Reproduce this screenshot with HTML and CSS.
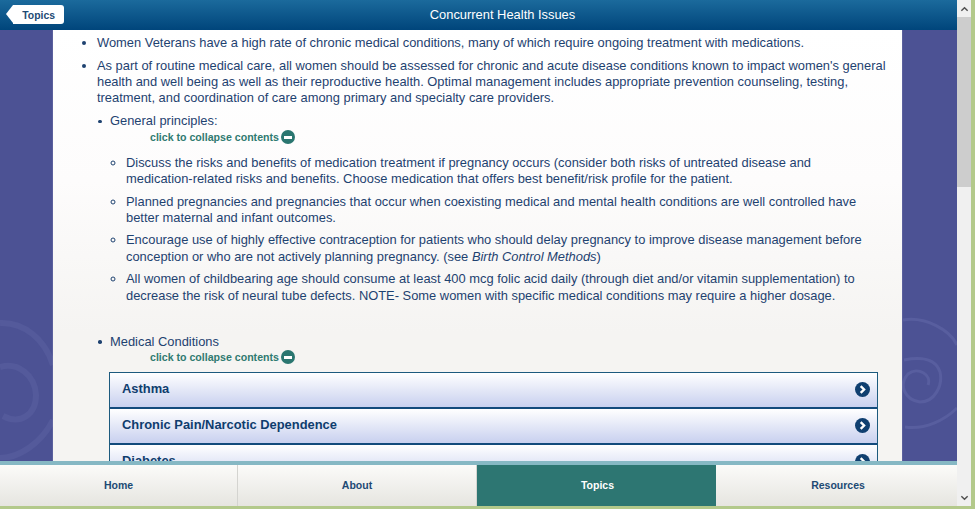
FILE: index.html
```html
<!DOCTYPE html>
<html lang="en">
<head>
<meta charset="utf-8">
<title>Concurrent Health Issues</title>
<link rel="stylesheet" href="styles.css">
</head>
<body>
<div class="window">
  <div class="app">
    <header class="topbar">
      <a class="back">Topics</a>
      <h1 class="title">Concurrent Health Issues</h1>
    </header>
    <main class="stage">
      <svg class="swirl swirl-left" viewBox="0 310 53 150" aria-hidden="true"><path d="M0 323C25 322 45 340 53 365"/><path d="M0 367C18 362 35 375 36 395 36 415 20 425 3 416"/><path d="M0 458C20 458 42 442 53 420"/></svg>
      <svg class="swirl swirl-right" viewBox="902 310 55 130" aria-hidden="true"><path d="M903 320C925 316 950 330 957 345"/><path d="M905 427C925 430 945 420 957 408"/><path d="M928 385C932 375 918 366 908 374 898 385 905 400 920 402 935 402 943 385 940 372 936 360 925 356 904 360"/></svg>
      <article class="panel">
        <ul class="list-main">
          <li>Women Veterans have a high rate of chronic medical conditions, many of which require ongoing treatment with medications.</li>
          <li>As part of routine medical care, all women should be assessed for chronic and acute disease conditions known to impact women's general health and well being as well as their reproductive health. Optimal management includes appropriate prevention counseling, testing, treatment, and coordination of care among primary and specialty care providers.</li>
        </ul>
        <ul class="list-sub">
          <li>
            General principles:
            <div class="collapse">click to collapse contents <span class="minus"></span></div>
            <ul class="list-circle">
              <li>Discuss the risks and benefits of medication treatment if pregnancy occurs (consider both risks of untreated disease and <span class="nowrap">medication-related</span> risks and benefits. Choose medication that offers best benefit/risk profile for the patient.</li>
              <li>Planned pregnancies and pregnancies that occur when coexisting medical and mental health conditions are well controlled have better maternal and infant outcomes.</li>
              <li>Encourage use of highly effective contraception for patients who should delay pregnancy to improve disease management before conception or who are not actively planning pregnancy. (see <em>Birth Control Methods</em>)</li>
              <li>All women of childbearing age should consume at least 400 mcg folic acid daily (through diet and/or vitamin supplementation) to decrease the risk of neural tube defects. NOTE- Some women with specific medical conditions may require a higher dosage.</li>
            </ul>
          </li>
          <li class="conditions">
            Medical Conditions
            <div class="collapse">click to collapse contents <span class="minus"></span></div>
            <div class="accordion">
              <div class="acc-row"><span>Asthma</span><svg class="chev" viewBox="0 0 14 14" aria-hidden="true"><circle cx="7" cy="7" r="7"/><path d="M5.300 3.800 8.500 7l-3.200 3.200"/></svg></div>
              <div class="acc-row"><span>Chronic Pain/Narcotic Dependence</span><svg class="chev" viewBox="0 0 14 14" aria-hidden="true"><circle cx="7" cy="7" r="7"/><path d="M5.300 3.800 8.500 7l-3.200 3.200"/></svg></div>
              <div class="acc-row"><span>Diabetes</span><svg class="chev" viewBox="0 0 14 14" aria-hidden="true"><circle cx="7" cy="7" r="7"/><path d="M5.300 3.800 8.500 7l-3.200 3.200"/></svg></div>
            </div>
          </li>
        </ul>
      </article>
    </main>
    <nav class="tabs">
      <a class="tab">Home</a>
      <a class="tab">About</a>
      <a class="tab active">Topics</a>
      <a class="tab">Resources</a>
    </nav>
  </div>
  <div class="scrollbar">
    <div class="arrow"><svg viewBox="0 0 10 6" aria-hidden="true"><path d="M1.500 5 5 1.500 8.500 5"/></svg></div>
    <div class="thumb"></div>
    <div class="track"></div>
    <div class="arrow"><svg viewBox="0 0 10 6" aria-hidden="true"><path d="M1.500 1 5 4.500 8.500 1"/></svg></div>
  </div>
</div>
</body>
</html>
```
FILE: styles.css
```css
* { box-sizing: border-box; }
html, body { margin: 0; height: 100%; overflow: hidden; }
body { font-family: "Liberation Sans", Arial, sans-serif; background: #b3c98b; }
.window { display: flex; width: 971px; height: 506px; }
.app { width: 957px; display: flex; flex-direction: column; }

.topbar { height: 30px; flex: none; display: flex; align-items: center; padding: 0 16px 0 6px; background: linear-gradient(#1b6a9c, #00457b); }
.back { position: relative; width: 51px; height: 19px; margin: 0 0 1px 7px; background: #fff; border-radius: 0 3px 3px 0; color: #1d4a74; font-size: 10.400px; font-weight: bold; line-height: 22px; text-align: right; padding-right: 9px; }
.back::before { content: ""; position: absolute; left: -7px; top: 0; border-style: solid; border-width: 9.500px 7px 9.500px 0; border-color: transparent #fff transparent transparent; }
.title { flex: 1; margin: 0 0 2px; color: #fff; font-size: 12.900px; font-weight: normal; text-align: center; }

.stage { position: relative; flex: 1; min-height: 0; overflow: hidden; background: #4c5294; display: flex; padding: 0 55px 0 53px; }
.swirl { position: absolute; fill: none; stroke: #585e9f; }
.swirl-left { left: 0; top: 280px; width: 53px; height: 150px; stroke-width: 6; stroke: #545a9b; }
.swirl-right { left: 902px; top: 280px; width: 55px; height: 130px; stroke-width: 3; }

.panel { position: relative; flex: 1; overflow: hidden; padding: 5px 14px 0 32px; background: linear-gradient(#fff, #fdfcfc 35%, #f5f4f2 70%); box-shadow: 0 0 1px #a5a6c9; color: #1e4270; font-size: 12.900px; line-height: 16.200px; }
ul { margin: 0; padding: 0; }
.nowrap { white-space: nowrap; }
.list-main { list-style: disc; padding-left: 12px; }
.list-main > li { margin-bottom: 6.800px; }
.list-sub { list-style: none; margin-top: 4px; }
.list-sub > li { position: relative; padding-left: 25px; }
.list-sub > li::before { content: ""; position: absolute; left: 13px; top: 6.500px; width: 3.500px; height: 3.500px; border-radius: 50%; background: #1e4270; }
.conditions { margin-top: 30px; }

.collapse { display: flex; align-items: center; gap: 2px; height: 15px; padding-left: 40px; color: #2f7a70; font-size: 10.600px; font-weight: bold; line-height: 15px; }
.minus { position: relative; width: 14px; height: 14px; border-radius: 50%; background: #2a7670; }
.minus::after { content: ""; position: absolute; left: 3px; top: 5.500px; width: 8px; height: 3px; background: #fff; }

.list-circle { list-style: circle; padding-left: 16px; margin-top: 10px; }
.list-circle > li { margin-bottom: 6.500px; }

.accordion { width: 769px; margin: 7px 0 0 -1px; border: 1px solid #1c5a7e; border-bottom: 0; }
.acc-row { display: flex; align-items: center; justify-content: space-between; height: 36px; padding: 0 7px 1px 12px; background: linear-gradient(#fff, #c8d0ef); border-bottom: 2px solid #124a7c; color: #0f3d6e; font-size: 12.900px; font-weight: bold; }
.chev { width: 15px; height: 15px; }
.chev circle { fill: #0f3f70; }
.chev path { fill: none; stroke: #fff; stroke-width: 2.200; }

.tabs { flex: none; height: 45px; display: flex; border-top: 4px solid #86b8c4; background: linear-gradient(#fbfbf9, #e6e5e0); }
.tab { width: 239px; display: flex; align-items: center; justify-content: center; padding-bottom: 2px; color: #1d4a74; font-size: 10.500px; font-weight: bold; border-right: 1px solid #d4d4d0; }
.tab:first-child { width: 238px; }
.tab:last-child { flex: 1; border-right: 0; padding-left: 3px; }
.tab.active { background: #2d7672; color: #fff; border-right: 0; padding-left: 2px; }

.scrollbar { width: 14px; display: flex; flex-direction: column; background: #f0f0f0; }
.arrow { height: 17px; flex: none; display: flex; align-items: center; justify-content: center; }
.arrow svg { width: 9px; height: 6px; fill: none; stroke: #505050; stroke-width: 1.600; }
.thumb { height: 170px; flex: none; background: #cdcdcd; }
.track { flex: 1; }
```
